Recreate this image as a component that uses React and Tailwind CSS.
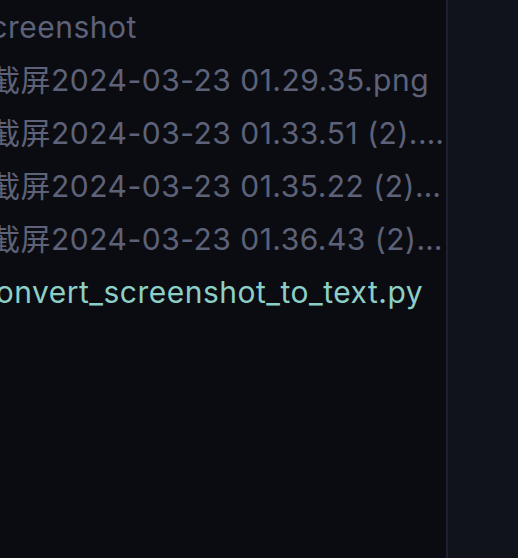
import React from 'react';

const files = [
  { name: 'screenshot', indent: 'ml-[-8px]', color: 'text-[#5d6279]' },
  { name: '截屏2024-03-23 01.29.35.png', indent: 'ml-[8px]', color: 'text-[#5d6279]' },
  { name: '截屏2024-03-23 01.33.51 (2).png', indent: 'ml-[8px]', color: 'text-[#5d6279]' },
  { name: '截屏2024-03-23 01.35.22 (2).png', indent: 'ml-[8px]', color: 'text-[#5d6279]' },
  { name: '截屏2024-03-23 01.36.43 (2).png', indent: 'ml-[8px]', color: 'text-[#5d6279]' },
  { name: 'convert_screenshot_to_text.py', indent: 'ml-[-4px]', color: 'text-[#8bcfc6]' },
];

export default function App() {
  return (
    <div className="flex h-[558px] w-[518px] overflow-hidden bg-[#0b0c11] font-['Inter','Noto_Sans_CJK_SC',sans-serif]">
      {/* Explorer tree */}
      <div className="w-[446px] shrink-0 overflow-hidden pt-[7px]">
        <div className="ml-[-18px] w-[464px] flex flex-col">
          {files.map((f) => (
            <div
              key={f.name}
              className={`h-[53px] leading-[40px] text-[30px] tracking-[0.5px] whitespace-nowrap overflow-hidden text-ellipsis ${f.indent} ${f.color}`}
            >
              {f.name}
            </div>
          ))}
        </div>
      </div>
      {/* Divider */}
      <div className="w-[2px] shrink-0 bg-[#1d2030]" />
      {/* Editor area */}
      <div className="flex-1 bg-[#10131b]" />
    </div>
  );
}
